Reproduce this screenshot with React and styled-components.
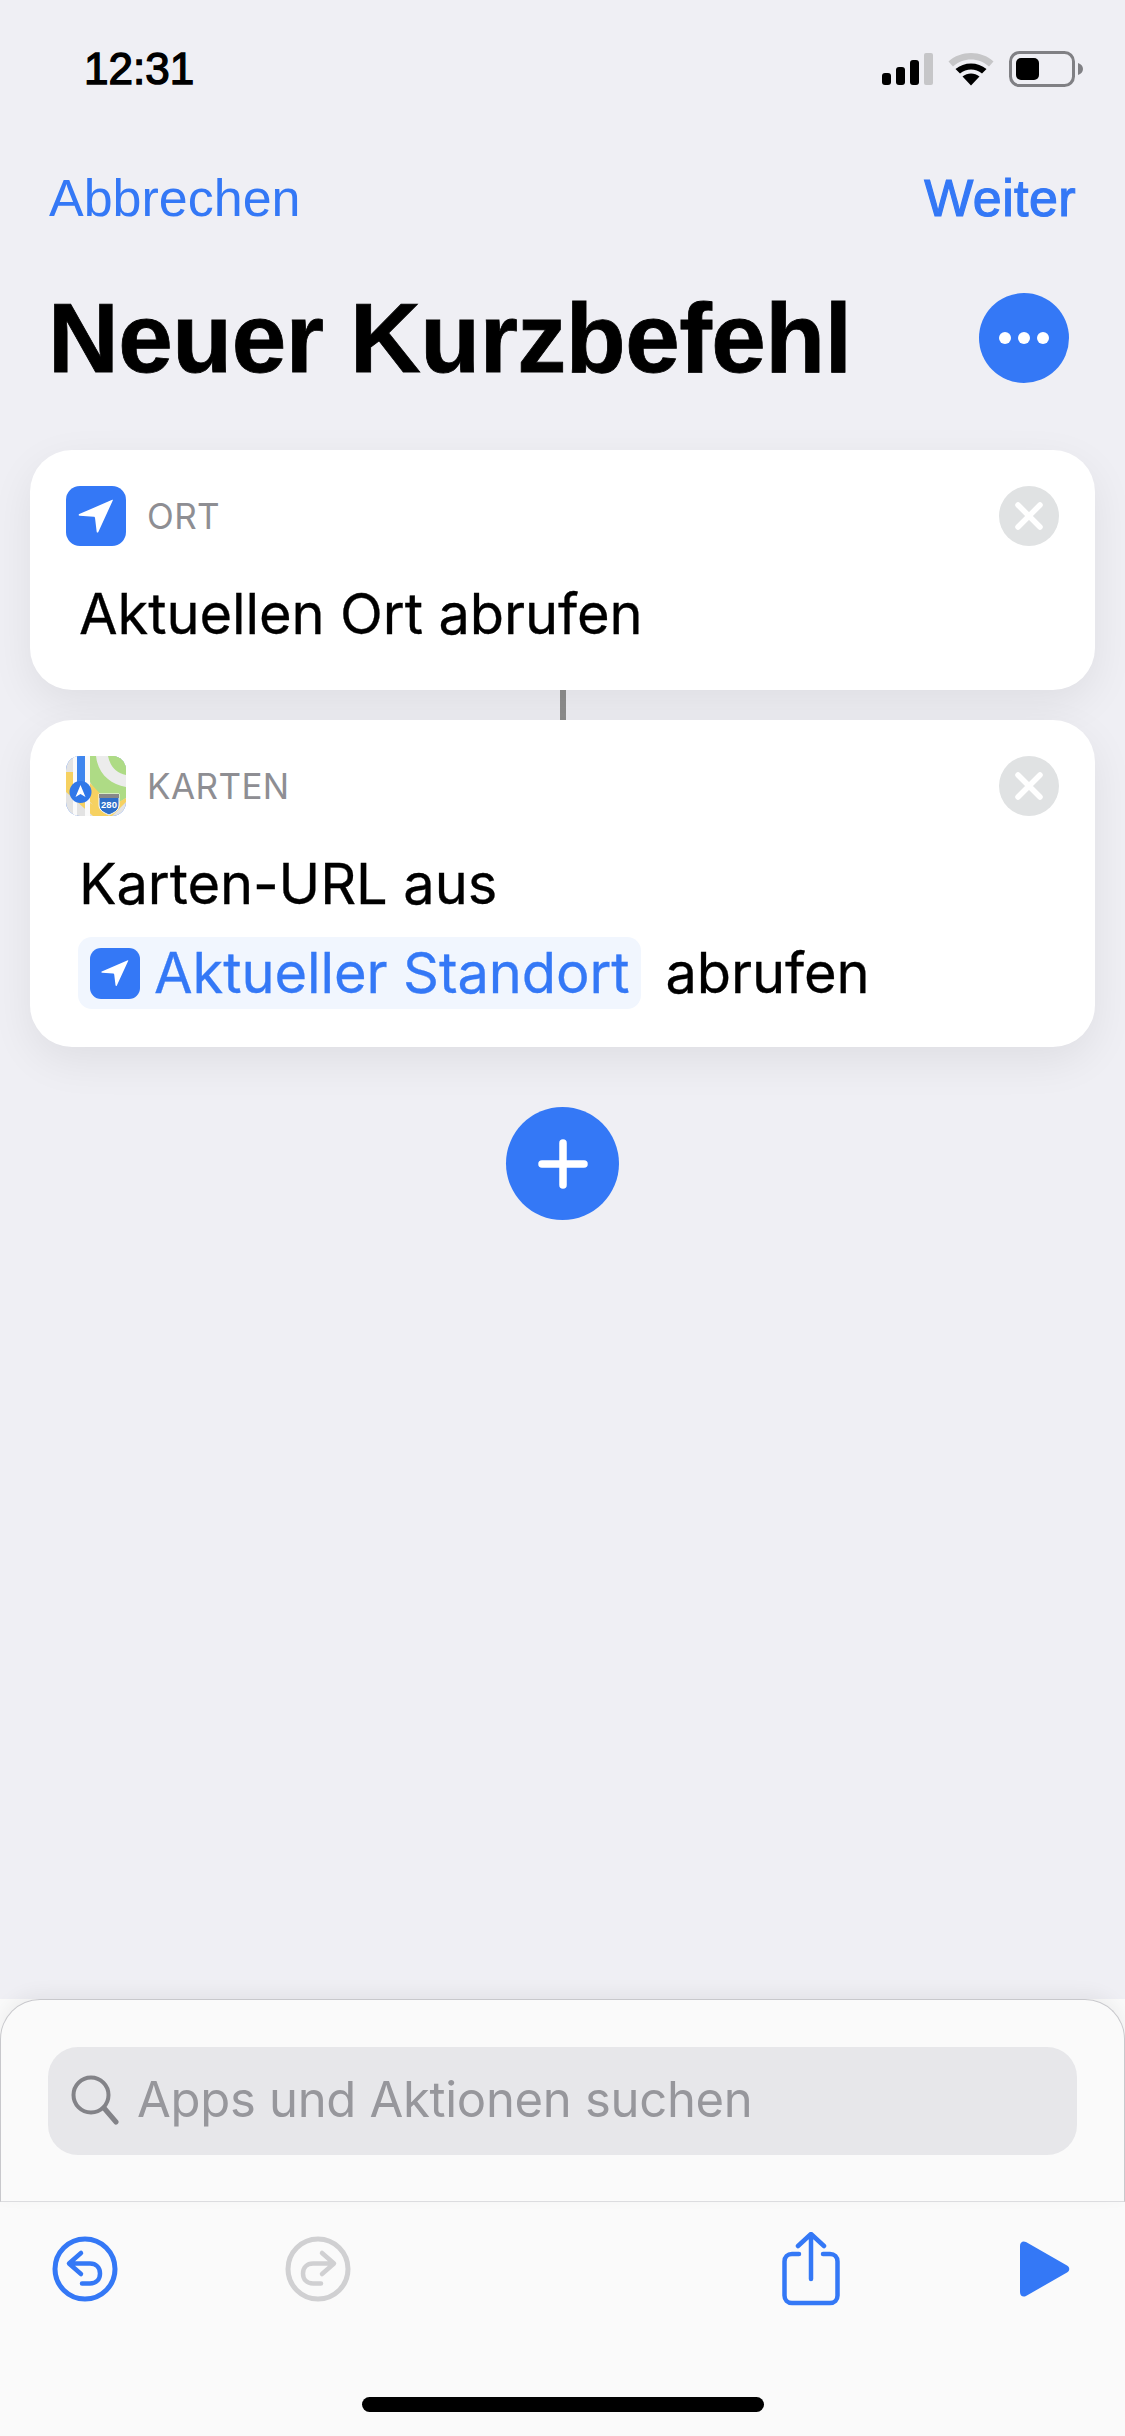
import React from "react";
import styled, { createGlobalStyle } from "styled-components";

const Global = createGlobalStyle`
  html, body { margin: 0; padding: 0; background: #efeff4; }
  body { font-family: Inter, "Liberation Sans", sans-serif; -webkit-font-smoothing: antialiased; }
  * { box-sizing: border-box; }
`;
const BLUE = "#3478f6";

const Page = styled.div`
  width: 1125px; height: 2436px; overflow: hidden;
  display: flex; flex-direction: column; background: #efeff4;
`;
const StatusBar = styled.div`
  height: 138px; padding: 0 42px 0 84px;
  display: flex; align-items: center; justify-content: space-between;
`;
const Time = styled.div`
  font: 400 44px/52px "Liberation Sans", sans-serif; color: #000;
  -webkit-text-stroke: 1.4px #000;
`;
const StatusIcons = styled.div`display: flex; align-items: center; gap: 15px;`;
const Nav = styled.div`
  height: 60px; margin-top: 30px; padding: 0 49px 0 49px;
  display: flex; align-items: center; justify-content: space-between;
`;
const NavLink = styled.a`
  font: 400 52px/60px "Liberation Sans", sans-serif; color: ${BLUE};
  letter-spacing: ${p => (p.$strong ? "0.4px" : "0")};
  -webkit-text-stroke: ${p => (p.$strong ? "1.2px" : "0")} ${BLUE};
`;
const TitleRow = styled.div`
  height: 90px; margin-top: 65px; padding: 0 56px 0 48px;
  display: flex; align-items: center; justify-content: space-between;
`;
const Title = styled.h1`
  margin: 0; font: 700 98px/90px "Liberation Sans", sans-serif; color: #000; letter-spacing: -0.5px;
  -webkit-text-stroke: 0.8px #000;
`;
const MoreButton = styled.div`
  width: 90px; height: 90px; border-radius: 50%; background: ${BLUE};
  display: flex; align-items: center; justify-content: center; gap: 7px;
`;
const Dot = styled.span`width: 12px; height: 12px; border-radius: 50%; background: #fff;`;
const Flow = styled.div`
  margin-top: 67px; padding: 0 30px; display: flex; flex-direction: column; align-items: stretch;
`;
const Card = styled.div`
  background: #fff; border-radius: 42px; padding: 36px 36px 0;
  height: ${p => p.$h}px; position: relative; z-index: 1;
  box-shadow: 0 14px 44px rgba(0, 0, 0, 0.07);
`;
const CardHead = styled.div`display: flex; align-items: center; height: 60px;`;
const CardLabel = styled.span`
  margin-left: 21px; flex: 1; font: 400 35px/60px Inter, sans-serif; color: #8e8e93; letter-spacing: 0.4px;
`;
const CloseBtn = styled.div`
  width: 60px; height: 60px; border-radius: 50%; background: #e0e2e3;
  display: flex; align-items: center; justify-content: center;
`;
const AppIcon = styled.div`
  width: 60px; height: 60px; border-radius: 14px; background: ${BLUE}; overflow: hidden;
  display: flex; align-items: center; justify-content: center;
`;
const ActionLine = styled.div`
  display: flex; align-items: center; height: 72px; margin-left: 13px;
  margin-top: ${p => p.$mt}px;
  font: 400 56px/72px Inter, sans-serif; color: #000; white-space: nowrap; letter-spacing: -0.1px;
  -webkit-text-stroke: 0.3px currentColor;
`;
const Connector = styled.div`width: 6px; height: 30px; background: #8e8e8e; align-self: center;`;
const Chip = styled.span`
  display: inline-flex; align-items: center; height: 72px; padding: 0 12px 0 12px; margin-left: -1px;
  background: #f1f6fe; border-radius: 14px; color: ${BLUE}; margin-right: 24px;
`;
const ChipIcon = styled.span`
  width: 50px; height: 51px; border-radius: 11px; background: ${BLUE}; margin-right: 14px;
  display: flex; align-items: center; justify-content: center;
`;
const AddRow = styled.div`margin-top: 60px; display: flex; justify-content: center;`;
const AddButton = styled.div`
  width: 113px; height: 113px; border-radius: 50%; background: ${BLUE};
  display: flex; align-items: center; justify-content: center;
`;
const Sheet = styled.div`
  margin-top: auto; height: 437px; background: #fafafa; display: flex; flex-direction: column;
`;
const SearchPane = styled.div`
  height: 203px; padding: 47px 47px 0;
  border: 1px solid #c8c8cc; border-bottom: 1px solid #dcdcdf; border-radius: 40px 40px 0 0;
  box-shadow: 0 -6px 18px rgba(0, 0, 0, 0.05);
`;
const SearchField = styled.div`
  height: 108px; border-radius: 30px; background: #e7e7ea; padding: 0 0 2px 23px;
  display: flex; align-items: center; gap: 18px;
  font: 400 49px/60px Inter, sans-serif; color: #97979c; letter-spacing: -0.3px;
`;
const Toolbar = styled.div`
  height: 133px; padding: 0 55px 0 52px; display: flex; align-items: center; position: relative;
`;
const ToolSlot = styled.div`
  display: flex; margin-left: ${p => p.$ml || 0}px;
`;
const HomeBar = styled.div`
  width: 402px; height: 15px; border-radius: 8px; background: #000; margin: 62px auto 0;
`;

const Arrow = ({ size = 38 }) => (
  <svg width={size} height={size} viewBox="0 0 34 34">
    <path d="M31.500 2.500 2 15.300c-.9.5-.6 1.300.4 1.400l12.600.9c.6 0 1 .4 1.100 1l1.500 12.400c.1 1 1 1.200 1.500.3L32 3.100c.2-.5 0-.8-.5-.6Z" fill="#fff" />
  </svg>
);

const MapsIcon = () => (
  <svg width="60" height="60" viewBox="0 0 60 60">
    <rect width="60" height="60" fill="#e3e3e3" />
    <path d="M24 0h36v42L44 52 30 36 24 26Z" fill="#aedb85" />
    <path d="M30 0c2 18 14 28 30 31V19C50 17 44 10 42 0Z" fill="#ececec" />
    <path d="M44 0c1 7 6 12 16 14V0Z" fill="#aedb85" />
    <path d="M0 16l7 0 0 24 8 2 22 12 4 6H27L0 36Z" fill="#f6d161" />
    <path d="M24 27 46 50 60 42v4L46 60H38L18 40Z" fill="#f6d161" />
    <path d="M7 0h4v60H7ZM19 0h5v60h-5Z" fill="#fafafa" />
    <rect x="11" width="8" height="30" fill="#3f86ee" />
    <circle cx="14.5" cy="36" r="11" fill="#2f77e9" />
    <path d="M14.500 29l5 12-5-3-5 3Z" fill="#fff" />
    <path d="M33 38h20v11c0 6-6 8-10 10-4-2-10-4-10-10Z" fill="#2e6fc9" stroke="#fff" strokeWidth="1" />
    <rect x="33" y="38" width="20" height="4" fill="#888" />
    <text x="43" y="52" textAnchor="middle" fontFamily="Liberation Sans" fontWeight="700" fontSize="9.5" fill="#fff">280</text>
  </svg>
);

const CloseIcon = () => (
  <svg width="28" height="28" viewBox="0 0 28 28">
    <path d="M3 3l22 22M25 3 3 25" stroke="#fff" strokeWidth="5.5" strokeLinecap="round" />
  </svg>
);

const Signal = () => (
  <svg width="52" height="34" viewBox="0 0 52 34">
    <rect x="1" y="21" width="9" height="12" rx="3" />
    <rect x="15" y="15" width="9" height="18" rx="3" />
    <rect x="29" y="8" width="9" height="25" rx="3" />
    <rect x="43" y="1" width="9" height="32" rx="2" fill="#c6c6c8" />
  </svg>
);

const Wifi = () => (
  <svg width="46" height="34" viewBox="0 0 46 34">
    <path d="M0.5 9.5C12.500 -2 33.500 -2 45.500 9.500L41 14.500C31 5 15 5 5 14.500Z" fill="#c6c6c8" />
    <path d="M7.500 17C16 9.500 30 9.500 38.500 17L34 21.500C27.500 16 18.500 16 12 21.500Z" />
    <path d="M14.500 24.500C19.500 20.500 26.500 20.500 31.500 24.500L23 33.500Z" />
  </svg>
);

const Battery = () => (
  <svg width="74" height="36" viewBox="0 0 74 36">
    <rect x="1.500" y="1.500" width="63" height="33" rx="9" fill="none" stroke="#808084" strokeWidth="3" />
    <rect x="7" y="7" width="23" height="22" rx="5" />
    <path d="M69 12c3 1 5 3 5 6s-2 5-5 6Z" fill="#808084" />
  </svg>
);

const RoundArrow = ({ color, flip }) => (
  <svg width="66" height="66" viewBox="0 0 66 66" fill="none" stroke={color} strokeLinecap="round" strokeLinejoin="round"
    style={flip ? { transform: "scaleX(-1)" } : undefined}>
    <circle cx="33" cy="33" r="30" strokeWidth="5" />
    <path d="M29 17 17 27.500l12 10.500M18 27.500h20c6 0 10 4 10 10s-4 10-10 10h-8" strokeWidth="4.500" />
  </svg>
);

const Share = () => (
  <svg width="58" height="74" viewBox="0 0 58 74" fill="none" stroke={BLUE} strokeLinecap="round" strokeLinejoin="round" strokeWidth="4.500">
    <path d="M29 47V3M16 14 29 2l13 12" />
    <path d="M17 22H10c-4.500 0-7.500 3-7.500 7.500v34c0 4.500 3 7.500 7.500 7.500h38c4.500 0 7.500-3 7.500-7.500v-34c0-4.500-3-7.500-7.500-7.500h-7" />
  </svg>
);

const Play = () => (
  <svg width="50" height="56" viewBox="0 0 50 56">
    <path d="M0 5C0 1 3-.5 6 1l41 23.500c3 1.700 3 5.300 0 7L6 55c-3 1.500-6 0-6-4Z" fill={BLUE} />
  </svg>
);

const SearchGlass = () => (
  <svg width="48" height="50" viewBox="0 0 48 50" fill="none" stroke="#838388" strokeLinecap="round">
    <circle cx="20" cy="20" r="17.500" strokeWidth="4" />
    <path d="M33 33 45 47" strokeWidth="5" />
  </svg>
);

export default function App() {
  return (
    <Page>
      <Global />
      <StatusBar>
        <Time>12:31</Time>
        <StatusIcons>
          <Signal />
          <Wifi />
          <Battery />
        </StatusIcons>
      </StatusBar>
      <Nav>
        <NavLink>Abbrechen</NavLink>
        <NavLink $strong>Weiter</NavLink>
      </Nav>
      <TitleRow>
        <Title>Neuer Kurzbefehl</Title>
        <MoreButton><Dot /><Dot /><Dot /></MoreButton>
      </TitleRow>
      <Flow>
        <Card $h={240}>
          <CardHead>
            <AppIcon><Arrow /></AppIcon>
            <CardLabel>ORT</CardLabel>
            <CloseBtn><CloseIcon /></CloseBtn>
          </CardHead>
          <ActionLine $mt={32}>Aktuellen Ort abrufen</ActionLine>
        </Card>
        <Connector />
        <Card $h={327}>
          <CardHead>
            <AppIcon><MapsIcon /></AppIcon>
            <CardLabel>KARTEN</CardLabel>
            <CloseBtn><CloseIcon /></CloseBtn>
          </CardHead>
          <ActionLine $mt={32}>Karten-URL aus</ActionLine>
          <ActionLine $mt={17}>
            <Chip><ChipIcon><Arrow size={30} /></ChipIcon>Aktueller Standort</Chip>abrufen
          </ActionLine>
        </Card>
      </Flow>
      <AddRow>
        <AddButton>
          <svg width="50" height="50" viewBox="0 0 50 50">
            <path d="M25 4v42M4 25h42" stroke="#fff" strokeWidth="7.500" strokeLinecap="round" />
          </svg>
        </AddButton>
      </AddRow>
      <Sheet>
        <SearchPane>
          <SearchField><SearchGlass />Apps und Aktionen suchen</SearchField>
        </SearchPane>
        <Toolbar>
          <ToolSlot><RoundArrow color={BLUE} /></ToolSlot>
          <ToolSlot $ml={167}><RoundArrow color="#d0d0d2" flip /></ToolSlot>
          <ToolSlot $ml={431}><Share /></ToolSlot>
          <ToolSlot $ml={180}><Play /></ToolSlot>
        </Toolbar>
        <HomeBar />
      </Sheet>
    </Page>
  );
}
